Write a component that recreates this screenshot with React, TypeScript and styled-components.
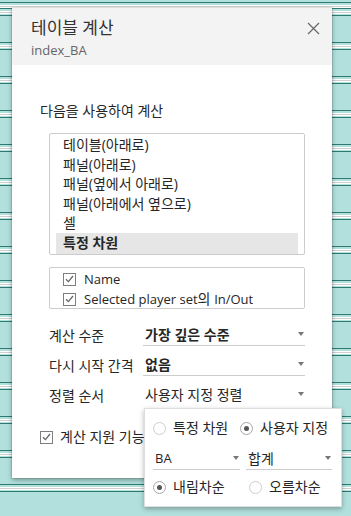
import React from "react";
import styled, { createGlobalStyle } from "styled-components";

const GlobalStyle = createGlobalStyle`
  html, body {
    margin: 0;
    padding: 0;
  }
  body {
    font-family: "Open Sans", "Noto Sans CJK KR", sans-serif;
    font-size: 14px;
    color: #262626;
    background-color: #b2e1dd;
    background-image: repeating-linear-gradient(
      to bottom,
      #2f7a71 0px,
      #2f7a71 1px,
      #b2e1dd 1px,
      #b2e1dd 3px,
      #ffffff 3px,
      #ffffff 4px,
      #cfcfcf 4px,
      #cfcfcf 5px,
      #ffffff 5px,
      #ffffff 6px,
      #b2e1dd 6px,
      #b2e1dd 7px,
      #2f7a71 7px,
      #2f7a71 8px,
      #b2e1dd 8px,
      #b2e1dd 34px
    );
    background-position: 0 8px;
    min-height: 516px;
  }
`;

// latin words render a notch smaller than hangul in the original
const Latin = styled.span`
  font-size: 13px;
`;

const Page = styled.div`
  padding: 8px 0 0 12px;
  height: 516px;
  box-sizing: border-box;
`;

const Dialog = styled.div`
  position: relative;
  width: 320px;
  height: 470px;
  background: #ffffff;
  box-shadow: 0 2px 5px rgba(0, 0, 0, 0.35), 0 0 0 1px rgba(0, 0, 0, 0.08);
  display: flex;
  flex-direction: column;
`;

const Header = styled.div`
  height: 57px;
  box-sizing: border-box;
  background: #f3f3f3;
  padding: 10px 12px 0 19px;
  display: flex;
  justify-content: space-between;
  align-items: flex-start;
`;

const Title = styled.div`
  font-size: 17px;
  line-height: 20px;
  color: #333333;
`;

const Subtitle = styled.div`
  font-size: 13px;
  line-height: 20px;
  color: #666666;
  margin-top: 2px;
`;

const CloseButton = styled.button`
  border: none;
  background: none;
  padding: 0;
  margin-top: 4px;
  width: 13px;
  height: 13px;
  display: flex;
  cursor: pointer;
`;

const Body = styled.div`
  padding: 0 27px 0 28px;
  display: flex;
  flex-direction: column;
`;

const SectionLabel = styled.div`
  margin-top: 37px;
  line-height: 18px;
`;

const Indented = styled.div`
  margin-left: 9px;
`;

const ListBox = styled.div`
  margin-top: 13px;
  height: 122px;
  box-sizing: border-box;
  border: 1px solid #cccccc;
  border-radius: 2px;
  padding: 1px 6px 0;
  overflow: hidden;
`;

const ListItem = styled.div<{ $selected?: boolean }>`
  line-height: 19.5px;
  padding: 0 7px ${(p) => (p.$selected ? "3px" : "0")};
  font-weight: ${(p) => (p.$selected ? 700 : 400)};
  background: ${(p) => (p.$selected ? "#e6e6e6" : "transparent")};
`;

const CheckGroup = styled.div`
  margin-top: 12px;
  height: 42px;
  box-sizing: border-box;
  border: 1px solid #cccccc;
  border-radius: 2px;
  padding: 1px 13px 0;
`;

const CheckRow = styled.label`
  display: flex;
  align-items: center;
  gap: 8px;
  line-height: 20px;
  height: 20px;
`;

const Box = styled.span`
  width: 13px;
  height: 13px;
  box-sizing: border-box;
  border: 1px solid #7e7e7e;
  display: flex;
  align-items: center;
  justify-content: center;
  flex-shrink: 0;
`;

const FormRows = styled.div`
  margin-top: 15px;
  display: flex;
  flex-direction: column;
  gap: 8px;
`;

const FormRow = styled.div`
  display: grid;
  grid-template-columns: 94px 162px;
  align-items: center;
  height: 22px;
`;

const Select = styled.div<{ $bold?: boolean; $line?: boolean }>`
  height: 22px;
  box-sizing: border-box;
  border-bottom: 1px solid ${(p) => (p.$line ? "#cccccc" : "transparent")};
  display: flex;
  align-items: center;
  justify-content: space-between;
  padding: 0 1px 0 2px;
  font-weight: ${(p) => (p.$bold ? 700 : 400)};
  line-height: 21px;
`;

const Caret = styled.span`
  width: 0;
  height: 0;
  border-left: 3.5px solid transparent;
  border-right: 3.5px solid transparent;
  border-top: 4px solid #777777;
  margin-bottom: 2px;
`;

const Assist = styled.label`
  margin-top: 21px;
  display: flex;
  align-items: center;
  gap: 7px;
  line-height: 20px;
`;

const Popup = styled.div`
  position: absolute;
  left: 132px;
  top: 400px;
  width: 198px;
  height: 99px;
  box-sizing: border-box;
  background: #ffffff;
  border: 1px solid #dddddd;
  box-shadow: 0 2px 5px rgba(0, 0, 0, 0.3);
  padding: 9px 9px 0 8px;
  display: flex;
  flex-direction: column;
`;

const RadioRow = styled.div<{ $cols: string; $top?: number }>`
  display: grid;
  grid-template-columns: ${(p) => p.$cols};
  height: 20px;
  align-items: center;
  margin-top: ${(p) => p.$top ?? 0}px;
`;

const RadioItem = styled.label`
  display: flex;
  align-items: center;
  gap: 7px;
  line-height: 20px;
  white-space: nowrap;
`;

const Radio = styled.span<{ $on?: boolean }>`
  width: 13px;
  height: 13px;
  box-sizing: border-box;
  border-radius: 50%;
  border: 1px solid ${(p) => (p.$on ? "#a6a6a6" : "#cdcdcd")};
  display: flex;
  align-items: center;
  justify-content: center;
  flex-shrink: 0;

  &::after {
    content: "";
    width: 5px;
    height: 5px;
    border-radius: 50%;
    background: ${(p) => (p.$on ? "#555555" : "transparent")};
  }
`;

const SelectPair = styled.div`
  margin-top: 10px;
  display: grid;
  grid-template-columns: 87px 86px;
  gap: 6px;
`;

const Check = () => (
  <svg width="9" height="8" viewBox="0 0 9 8">
    <path d="M1 4.2 L3.4 6.6 L8 1" fill="none" stroke="#666666" strokeWidth="1.3" />
  </svg>
);

const listItems = [
  "테이블(아래로)",
  "패널(아래로)",
  "패널(옆에서 아래로)",
  "패널(아래에서 옆으로)",
  "셀",
];

export default function App() {
  return (
    <>
      <GlobalStyle />
      <Page>
        <Dialog>
          <Header>
            <div>
              <Title>테이블 계산</Title>
              <Subtitle>index_BA</Subtitle>
            </div>
            <CloseButton aria-label="닫기">
              <svg width="13" height="13" viewBox="0 0 13 13">
                <path d="M1 1 L12 12 M12 1 L1 12" stroke="#666666" strokeWidth="1.2" />
              </svg>
            </CloseButton>
          </Header>

          <Body>
            <SectionLabel>다음을 사용하여 계산</SectionLabel>
            <Indented>
              <ListBox>
                {listItems.map((item) => (
                  <ListItem key={item}>{item}</ListItem>
                ))}
                <ListItem $selected>특정 차원</ListItem>
              </ListBox>

              <CheckGroup>
                <CheckRow>
                  <Box>
                    <Check />
                  </Box>
                  <Latin>Name</Latin>
                </CheckRow>
                <CheckRow>
                  <Box>
                    <Check />
                  </Box>
                  <span>
                    <Latin>Selected player set</Latin>의 <Latin>In/Out</Latin>
                  </span>
                </CheckRow>
              </CheckGroup>

              <FormRows>
                <FormRow>
                  <span>계산 수준</span>
                  <Select $bold $line>
                    가장 깊은 수준
                    <Caret />
                  </Select>
                </FormRow>
                <FormRow>
                  <span>다시 시작 간격</span>
                  <Select $bold $line>
                    없음
                    <Caret />
                  </Select>
                </FormRow>
                <FormRow>
                  <span>정렬 순서</span>
                  <Select>
                    사용자 지정 정렬
                    <Caret />
                  </Select>
                </FormRow>
              </FormRows>
            </Indented>

            <Assist>
              <Box>
                <Check />
              </Box>
              계산 지원 기능 표시
            </Assist>
          </Body>

          <Popup>
            <RadioRow $cols="87px auto">
              <RadioItem>
                <Radio />
                특정 차원
              </RadioItem>
              <RadioItem>
                <Radio $on />
                사용자 지정
              </RadioItem>
            </RadioRow>
            <SelectPair>
              <Select $line>
                <Latin>BA</Latin>
                <Caret />
              </Select>
              <Select $line>
                합계
                <Caret />
              </Select>
            </SelectPair>
            <RadioRow $cols="96px auto" $top={7}>
              <RadioItem>
                <Radio $on />
                내림차순
              </RadioItem>
              <RadioItem>
                <Radio />
                오름차순
              </RadioItem>
            </RadioRow>
          </Popup>
        </Dialog>
      </Page>
    </>
  );
}
